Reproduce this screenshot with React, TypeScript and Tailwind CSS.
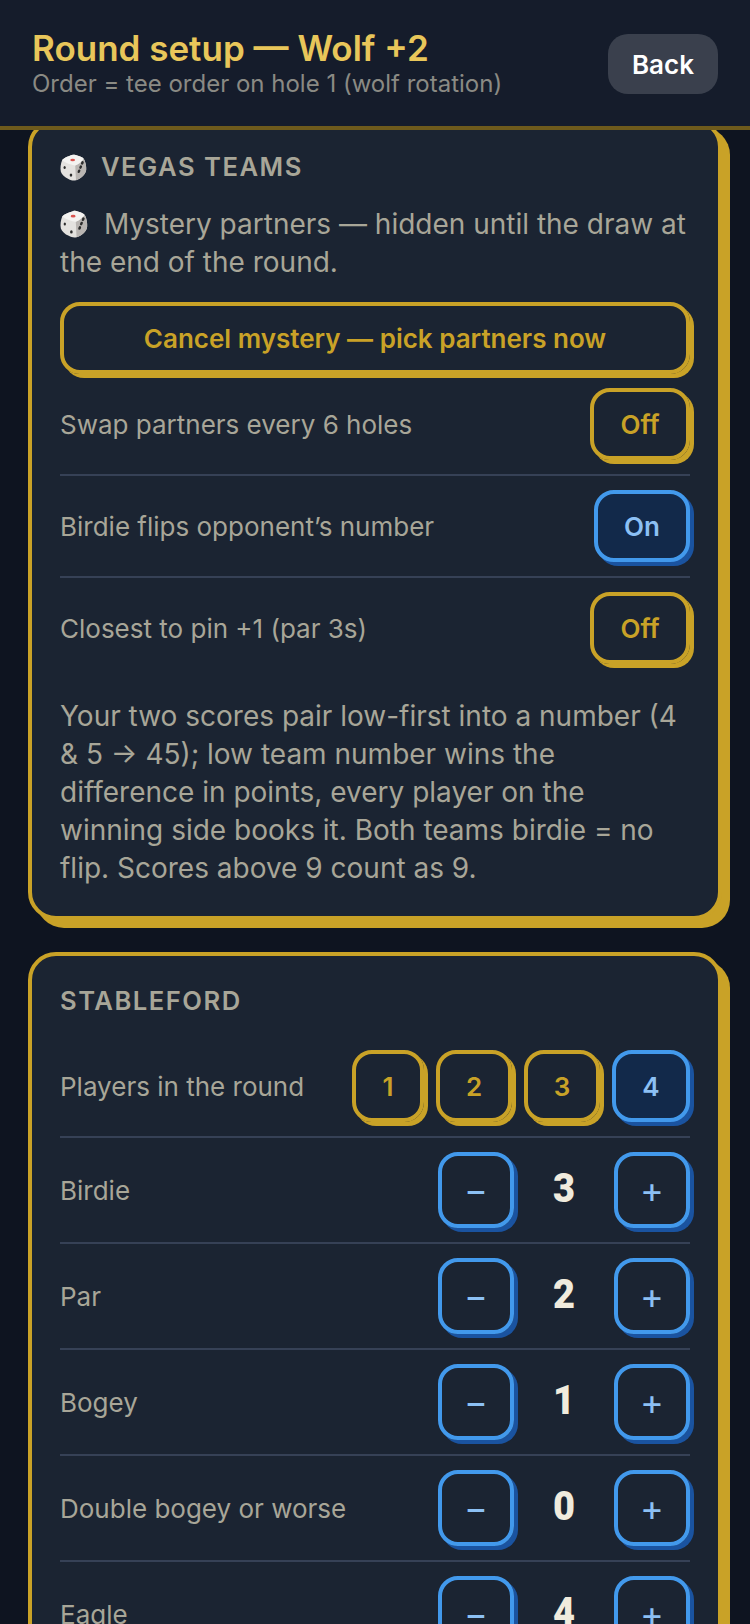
import React from "react";

const font = { fontFamily: "Inter, 'Noto Sans', sans-serif" };

function Die({ size }: { size: number }) {
  return (
    <svg width={size} height={size} viewBox="0 0 32 32" className="inline-block shrink-0 align-[-4px]">
      <path d="M15.5 1 C17 .6 26 3 28 5.5 C30 8 31.5 15 31 19 C30.5 24 25.5 29 19 31 C16 32 13 31 10 29.5 C5.5 27.5 2 24 1 21 C0 17 1 11 2.5 7.5 C4.5 4.5 12 2 15.5 1 Z" fill="#e4e2df" />
      <path d="M19 31 C25.5 29 30.5 24 31 19 C31.5 15 30 8 28 5.5 C26 9 21 12.5 18 13.5 C18.5 19 18.5 26 19 31 Z" fill="#b9b5b2" />
      <path d="M2.5 7.5 C7 11 13 13 18 13.5 C21 12.5 26 9 28 5.5 C26 3 17 .6 15.5 1 C12 2 4.5 4.5 2.5 7.5 Z" fill="#f4f3f1" />
      <ellipse cx="15" cy="7" rx="2.8" ry="1.5" fill="#d9534f" />
      <ellipse cx="5.5" cy="16" rx="1.3" ry="1.8" fill="#2c2c2c" />
      <ellipse cx="13" cy="25" rx="1.5" ry="1.9" fill="#2c2c2c" />
      <ellipse cx="26.5" cy="10.5" rx="1.5" ry="2.2" fill="#2c2c2c" transform="rotate(25 26.5 10.5)" />
      <ellipse cx="24.5" cy="15.5" rx="1.5" ry="2.2" fill="#2c2c2c" transform="rotate(25 24.5 15.5)" />
      <ellipse cx="22.5" cy="20.5" rx="1.5" ry="2.2" fill="#2c2c2c" transform="rotate(25 22.5 20.5)" />
    </svg>
  );
}

function GoldBtn({ children, className = "" }: { children: React.ReactNode; className?: string }) {
  return (
    <button className={`flex items-center justify-center rounded-[20px] border-4 border-[#c9a227] bg-transparent font-semibold text-[#c9a227] shadow-[4px_4px_0_#c9a227] ${className}`}>
      {children}
    </button>
  );
}

function BlueBtn({ children, active = false, className = "" }: { children: React.ReactNode; active?: boolean; className?: string }) {
  return (
    <button className={`flex items-center justify-center rounded-[20px] border-4 border-[#4299ec] shadow-[4px_4px_0_#1a53a0] text-[#8cc0f4] ${active ? "bg-[#12294a]" : "bg-transparent"} ${className}`}>
      {children}
    </button>
  );
}

function Toggle({ label, on, last = false }: { label: string; on: boolean; last?: boolean }) {
  return (
    <div className={`flex items-center justify-between py-[14px] ${last ? "" : "border-b-2 border-[#364156]"}`}>
      <span className="text-[26px] text-[#a8a698]">{label}</span>
      {on ? (
        <BlueBtn active className="h-[72px] w-[96px] text-[26px] font-semibold">On</BlueBtn>
      ) : (
        <GoldBtn className="h-[72px] w-[100px] text-[26px]">Off</GoldBtn>
      )}
    </div>
  );
}

function Stepper({ label, value }: { label: string; value: number }) {
  return (
    <div className="flex items-center justify-between border-b-2 border-[#364156] py-[14px]">
      <span className="text-[26px] text-[#a8a698]">{label}</span>
      <div className="flex items-center">
        <BlueBtn className="h-[76px] w-[76px] text-[36px] font-normal">−</BlueBtn>
        <span
          className="w-[100px] -translate-y-[1px] scale-x-95 text-center text-[40px] font-black text-[#f0ebdd]"
          style={{ fontFamily: "Roboto, sans-serif" }}
        >
          {value}
        </span>
        <BlueBtn className="h-[76px] w-[76px] text-[36px] font-normal">+</BlueBtn>
      </div>
    </div>
  );
}

export default function App() {
  return (
    <div className="h-[1624px] w-[750px] overflow-hidden bg-[#0e1420]" style={font}>
      <header className="relative z-10 flex h-[130px] items-center justify-between border-b-4 border-[#6e5a1c] bg-[#151c2b] pl-8 pr-8">
        <div className="mt-[2px]">
          <h1 className="text-[35px] font-semibold leading-[38px] text-[#e8c65a]">Round setup — Wolf +2</h1>
          <p className="mt-[2px] text-[24px] leading-[30px] text-[#8a8a84]">Order = tee order on hole 1 (wolf rotation)</p>
        </div>
        <button className="mt-[1px] h-[60px] w-[110px] rounded-[20px] bg-[#3a404d] pt-[1px] text-[26px] font-semibold text-white">Back</button>
      </header>

      <main className="-mt-[11px] px-7">
        <section className="mb-8 rounded-[28px] border-4 border-[#c9a227] bg-[#1b2432] px-7 pb-[29px] pt-[28px] shadow-[8px_8px_0_#c9a227]">
          <h2 className="flex items-center gap-[14px] text-[25.6px] font-semibold leading-[32px] tracking-[1.5px] text-[#a8a698]">
            <Die size={27} />
            VEGAS TEAMS
          </h2>
          <p className="mt-[22px] text-[28px] leading-[38px] text-[#a8a698]">
            <Die size={28} /> <span className="ml-[8px]">Mystery partners — hidden until the draw at the end of the round.</span>
          </p>
          <GoldBtn className="mt-[21px] h-[72px] w-full text-[26px]">Cancel mystery — pick partners now</GoldBtn>
          <div>
            <Toggle label="Swap partners every 6 holes" on={false} />
            <Toggle label="Birdie flips opponent’s number" on />
            <Toggle label="Closest to pin +1 (par 3s)" on={false} last />
          </div>
          <p className="mt-[19px] text-[28px] leading-[38px] text-[#a8a698]">
            Your two scores pair low-first into a number (4 &amp; 5 → 45); low team number wins the difference in points, every player on the winning side books it. Both teams birdie = no flip. Scores above 9 count as 9.
          </p>
        </section>

        <section className="rounded-[28px] border-4 border-[#c9a227] bg-[#1b2432] px-7 pt-[29px] shadow-[8px_8px_0_#c9a227]">
          <h2 className="text-[25.6px] font-semibold leading-[32px] tracking-[1.5px] text-[#a8a698]">STABLEFORD</h2>
          <div className="mt-[19px] flex items-center justify-between border-b-2 border-[#364156] py-[14px]">
            <span className="text-[26px] text-[#a8a698]">Players in the round</span>
            <div className="flex items-center gap-3">
              <GoldBtn className="h-[72px] w-[72px] text-[26px]">1</GoldBtn>
              <GoldBtn className="h-[72px] w-[76px] text-[26px]">2</GoldBtn>
              <GoldBtn className="h-[72px] w-[76px] text-[26px]">3</GoldBtn>
              <BlueBtn active className="h-[72px] w-[78px] text-[26px] font-semibold">4</BlueBtn>
            </div>
          </div>
          <Stepper label="Birdie" value={3} />
          <Stepper label="Par" value={2} />
          <Stepper label="Bogey" value={1} />
          <Stepper label="Double bogey or worse" value={0} />
          <Stepper label="Eagle" value={4} />
        </section>
      </main>
    </div>
  );
}
